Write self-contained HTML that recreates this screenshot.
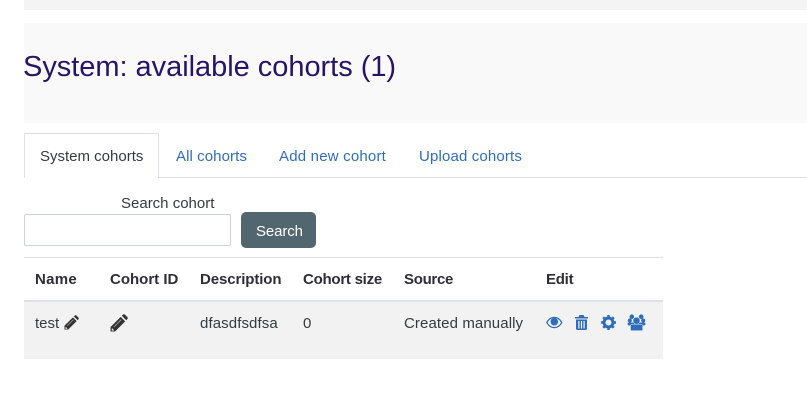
<!DOCTYPE html>
<html><head><meta charset="utf-8"><style>
html,body{margin:0;padding:0;background:#fff}
body{width:807px;height:409px;position:relative;overflow:hidden;font-family:"Liberation Sans",sans-serif;font-size:15px;color:#373a3c}
.a{position:absolute;white-space:nowrap;line-height:20px}
.l{color:#2f6dbb}
.b{font-weight:700;color:#2e2e33}
.box{position:absolute}
svg{position:absolute;display:block}
</style></head><body>
<div class="box" style="left:24px;top:0;width:783px;height:10px;background:#f4f4f4"></div>
<div class="box" style="left:24px;top:23px;width:783px;height:100px;background:#f9f9f9"></div>
<div class="a" style="left:23px;top:49px;line-height:36px;font-size:29px;letter-spacing:-.03px;color:#271466">System: available cohorts (1)</div>

<div class="box" style="left:24px;top:177px;width:783px;height:1px;background:#dee2e6"></div>
<div class="box" style="left:24px;top:133px;width:135px;height:45px;box-sizing:border-box;border:1px solid #dee2e6;border-bottom:0;background:#fff"></div>
<div class="a" style="left:40px;top:147px">System cohorts</div>
<div class="a l" style="left:176px;top:147px;letter-spacing:.08px">All cohorts</div>
<div class="a l" style="left:279px;top:147px;letter-spacing:.2px">Add new cohort</div>
<div class="a l" style="left:419px;top:147px;letter-spacing:.15px">Upload cohorts</div>

<div class="a" style="left:121px;top:194px">Search cohort</div>
<div class="box" style="left:24px;top:214px;width:207px;height:32px;box-sizing:border-box;border:1px solid #ced4da;border-radius:2px;background:#fff"></div>
<div class="box" style="left:241px;top:212px;width:75px;height:36px;border-radius:5px;background:#51666f"></div>
<div class="a" style="left:256px;top:222px;color:#fff;letter-spacing:-.1px">Search</div>

<div class="box" style="left:24px;top:257px;width:639px;height:1px;background:#dee2e6"></div>
<div class="box" style="left:24px;top:300px;width:639px;height:59px;background:#f2f2f2"></div>
<div class="box" style="left:24px;top:300px;width:639px;height:2px;background:#dee2e6"></div>
<div class="a b" style="left:35px;top:270px;letter-spacing:.3px">Name</div>
<div class="a b" style="left:110px;top:270px">Cohort ID</div>
<div class="a b" style="left:200px;top:270px;letter-spacing:-.1px">Description</div>
<div class="a b" style="left:303px;top:270px;letter-spacing:-.25px">Cohort size</div>
<div class="a b" style="left:404px;top:270px;letter-spacing:-.3px">Source</div>
<div class="a b" style="left:546px;top:270px;letter-spacing:-.25px">Edit</div>

<div class="a" style="left:35px;top:314px;">test</div>
<svg style="left:64px;top:315px" width="15" height="15" viewBox="0 0 16 16"><path fill="#333" d="M.5 11.500 9.500 2.500 13.500 6.500 4.500 15.500H.5Z"/><path fill="#333" d="M10.500 1.500 11.500 .6a1.300 1.300 0 0 1 1.800 0l2.100 2.100a1.300 1.300 0 0 1 0 1.800L14.500 5.500Z"/><path fill="none" stroke="#9a9a9a" stroke-width=".8" d="M3.500 11.500 10 5"/><path fill="#e8e8e8" d="M1.700 12.400 3.600 14.300 3 14.800H1.500Z"/></svg>
<svg style="left:110px;top:314px" width="18" height="18" viewBox="0 0 16 16"><path fill="#333" d="M.5 11.500 9.500 2.500 13.500 6.500 4.500 15.500H.5Z"/><path fill="#333" d="M10.500 1.500 11.500 .6a1.300 1.300 0 0 1 1.800 0l2.100 2.100a1.300 1.300 0 0 1 0 1.800L14.500 5.500Z"/><path fill="none" stroke="#9a9a9a" stroke-width=".8" d="M3.500 11.500 10 5"/><path fill="#e8e8e8" d="M1.700 12.400 3.600 14.300 3 14.800H1.500Z"/></svg>
<div class="a" style="left:200px;top:314px;letter-spacing:.1px">dfasdfsdfsa</div>
<div class="a" style="left:303px;top:314px">0</div>
<div class="a" style="left:404px;top:314px;letter-spacing:.1px">Created manually</div>

<svg style="left:546px;top:316px" width="17" height="13" viewBox="0 0 17 13"><path fill="none" stroke="#2f6dbb" stroke-width="1.300" d="M.8 6.500C2.600 3.200 5.300 1.400 8.300 1.400s5.700 1.800 7.500 5.100c-1.800 3.300-4.500 5.100-7.500 5.100S2.600 9.800.8 6.500Z"/><circle cx="8.300" cy="5.700" r="3.800" fill="#2f6dbb"/></svg>
<svg style="left:575px;top:315px" width="13" height="15" viewBox="0 0 13 15"><path fill="#2f6dbb" fill-rule="evenodd" d="M4.500 0H8.500L9.500 2H13V3.500H0V2H3.500ZM1 4.500H12V13.500a1.500 1.500 0 0 1-1.500 1.500h-8A1.500 1.500 0 0 1 1 13.500ZM3.300 6V13.500H4.500V6ZM5.900 6V13.500H7.100V6ZM8.500 6V13.500H9.700V6Z"/></svg>
<svg style="left:601px;top:315px" width="15" height="15" viewBox="0 0 15 15"><circle cx="7.500" cy="7.500" r="4.500" fill="none" stroke="#2f6dbb" stroke-width="3"/><path stroke="#2f6dbb" stroke-width="2.500" d="M7.500 0V15M0 7.500H15M2.200 2.200 12.800 12.800M12.800 2.200 2.200 12.800" stroke-dasharray="2.500 10"/></svg>
<svg style="left:627px;top:314px" width="19" height="17" viewBox="0 0 19 17"><g fill="#2f6dbb"><circle cx="4.800" cy="2.700" r="2.300"/><circle cx="14.200" cy="2.700" r="2.300"/><circle cx="2.800" cy="6.500" r="2"/><circle cx="16.200" cy="6.500" r="2"/><rect x=".6" y="8.500" width="17.800" height="3" rx="1.200"/><circle cx="9.500" cy="6.700" r="3.500" stroke="#f2f2f2" stroke-width=".5"/><path stroke="#f2f2f2" stroke-width=".5" d="M3.500 12Q3.500 10.200 5.500 10.200H13.500Q15.700 10.200 15.700 12V15.700A1 1 0 0 1 14.700 16.700H4.500A1 1 0 0 1 3.500 15.700Z"/></g></svg>
</body></html>
